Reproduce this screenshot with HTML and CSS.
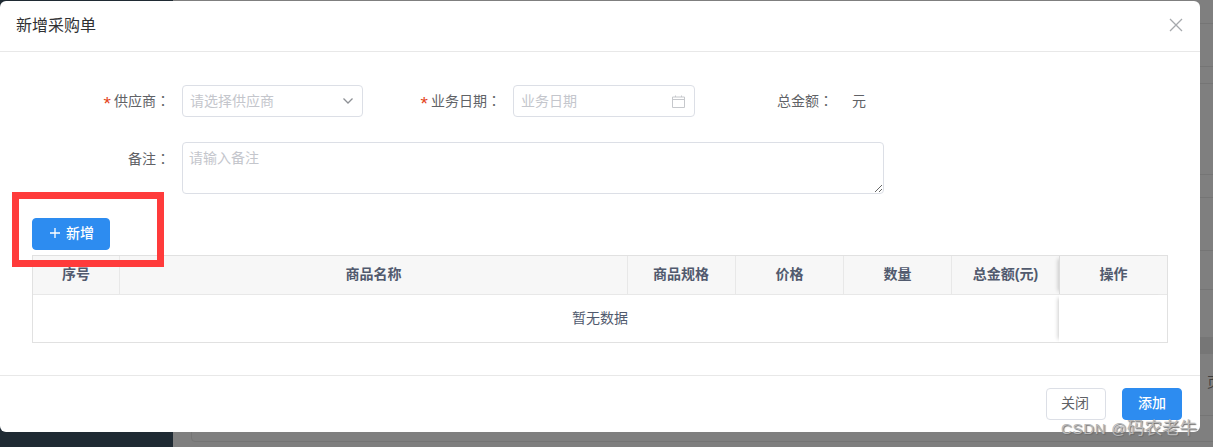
FILE: index.html
```html
<!DOCTYPE html>
<html lang="zh-CN">
<head>
<meta charset="utf-8">
<title>新增采购单</title>
<link rel="stylesheet" href="styles.css">
</head>
<body>
<div class="backdrop">
  <aside class="sidebar"></aside>
  <main class="main">
    <div class="main-card"></div>
    <span class="bg-line l1"></span>
    <span class="bg-line l2"></span>
    <span class="bg-line l3"></span>
    <span class="bg-line l4"></span>
    <span class="bg-line l5"></span>
    <span class="bg-line l6"></span>
    <span class="bg-line l7"></span>
    <span class="bg-band"></span>
    <span class="page-char">页</span>
  </main>
</div>

<section class="dialog">
  <header class="dialog-header">
    <h2 class="dialog-title">新增采购单</h2>
    <svg class="close-icon" width="14" height="14" viewBox="0 0 14 14"><path d="M1 1 L13 13 M13 1 L1 13" stroke="#a6a9ad" stroke-width="1.3" fill="none"/></svg>
  </header>
  <div class="dialog-body">
    <div class="form-row first-row">
      <label class="form-label"><span class="required">*</span>供应商<span class="colon" lang="zh-TW">：</span></label>
      <div class="input select-input">
        <span class="placeholder">请选择供应商</span>
        <svg width="10" height="6" viewBox="0 0 10 6"><path d="M0.5 0.5 L5 5 L9.5 0.5" stroke="#8d9095" stroke-width="1.3" fill="none"/></svg>
      </div>
      <label class="form-label"><span class="required">*</span>业务日期<span class="colon" lang="zh-TW">：</span></label>
      <div class="input date-input">
        <span class="placeholder">业务日期</span>
        <svg width="13" height="13" viewBox="0 0 13 13"><path d="M.5 2 H12.5 V12.5 H.5 Z M.5 4.5 H12.5 M3.5 .5 V2 M9.5 .5 V2" stroke="#c6c8cc" stroke-width="1" fill="none"/></svg>
      </div>
      <label class="form-label">总金额<span class="colon" lang="zh-TW">：</span></label>
      <span class="unit">元</span>
    </div>
    <div class="form-row note-row">
      <label class="form-label note-label">备注<span class="colon" lang="zh-TW">：</span></label>
      <textarea class="note-input" placeholder="请输入备注"></textarea>
    </div>
    <button class="btn btn-primary add-btn" type="button">
      <svg width="10" height="10" viewBox="0 0 10 10"><path d="M5 0 V10 M0 5 H10" stroke="#fff" stroke-width="1.3" fill="none"/></svg>
      <span>新增</span>
    </button>
    <div class="table">
      <div class="t-row t-head">
        <div class="cell">序号</div>
        <div class="cell">商品名称</div>
        <div class="cell cell-spec">商品规格</div>
        <div class="cell">价格</div>
        <div class="cell">数量</div>
        <div class="cell cell-total"><span>总金额<span class="latin">(</span>元<span class="latin">)</span></span></div>
        <div class="cell cell-fixed">操作</div>
      </div>
      <div class="t-empty">
        <div class="empty-text">暂无数据</div>
        <div class="empty-fixed"></div>
      </div>
    </div>
  </div>
  <footer class="dialog-footer">
    <button class="btn btn-plain" type="button">关闭</button>
    <button class="btn btn-primary submit-btn" type="button">添加</button>
  </footer>
</section>

<div class="annotation"></div>
<div class="watermark">CSDN @<span class="wm-cn">码农老牛</span></div>
</body>
</html>
```

FILE: styles.css
```css
* { box-sizing: border-box; }
html, body { margin: 0; padding: 0; height: 100%; overflow: hidden; }
body {
  font-family: "Noto Sans CJK SC", "Liberation Sans", sans-serif;
  font-size: 14px;
  color: #606266;
  background: #7f7f7f;
}
.backdrop { display: flex; height: 447px; }
.sidebar { width: 173px; background: #1f2a33; }
.main { flex: 1; background: #7f7f7f; position: relative; overflow: hidden; }
.main-card {
  position: absolute; left: 18px; top: 415px; width: 1100px; height: 27px;
  border: 1px solid #757575; border-radius: 4px;
}
.bg-line { position: absolute; left: 0; right: 0; height: 1px; background: #757575; }
.l1 { top: 23px; }
.l2 { top: 66px; }
.l3 { top: 83px; }
.l4 { top: 174px; }
.l5 { top: 197px; }
.l6 { top: 250px; }
.l7 { top: 289px; }
.bg-band { position: absolute; left: 0; right: 0; top: 337px; height: 17px; background: #767676; }
.page-char { position: absolute; left: 1034px; top: 371px; color: #3f3f3f; font-size: 14px; }

.dialog {
  position: absolute; left: 0; top: 1px;
  width: 1200px; height: 431px;
  background: #fff; border-radius: 6px;
  display: flex; flex-direction: column;
}
.dialog-header {
  height: 51px; flex: none;
  border-bottom: 1px solid #e8e8e8;
  display: flex; align-items: center; justify-content: space-between;
  padding: 0 17px 3px 16px;
}
.dialog-title { margin: 0 0 2px; font-size: 16px; font-weight: 400; color: #303133; line-height: 24px; }
.dialog-body { flex: 1; padding: 33px 32px 0; }
.form-row { display: flex; align-items: center; height: 32px; }
.form-label { width: 138px; flex: none; text-align: right; line-height: 30px; padding-bottom: 2px; color: #606266; white-space: nowrap; }
.note-label { line-height: 32px; padding-bottom: 0; }
.colon { font-family: "Noto Sans CJK TC", sans-serif; }
.required {
  color: #e4431a; margin-right: 1px;
  font-family: "Liberation Mono", monospace; font-size: 19px;
  line-height: 0; vertical-align: -4px;
}
.input {
  height: 32px; flex: none; margin-left: 12px;
  border: 1px solid #dcdfe6; border-radius: 4px;
  display: flex; align-items: center; justify-content: space-between;
  padding: 0 9px 0 7px;
}
.select-input { width: 181px; }
.date-input { width: 182px; }
.placeholder { color: #c4c6cc; padding-bottom: 2px; }
.unit { margin-left: 19px; color: #606266; padding-bottom: 2px; }
.note-row { margin-top: 25px; align-items: flex-start; height: 52px; }
.note-input {
  width: 702px; height: 52px; margin: 0 0 0 12px;
  border: 1px solid #dcdfe6; border-radius: 4px;
  padding: 4px 6px; resize: both;
  font: inherit; color: #606266; line-height: 20px; outline: none; display: block;
}
.note-input::placeholder { color: #c4c6cc; opacity: 1; }
.btn {
  height: 32px; border-radius: 4px; font: inherit; cursor: pointer;
  display: inline-flex; align-items: center; justify-content: center; padding: 0 0 4px;
}
.btn-primary { background: #2d8cf0; border: 1px solid #2d8cf0; color: #fff; font-weight: 500; }
.btn-plain { background: #fff; border: 1px solid #dcdfe6; color: #606266; width: 60px; padding-right: 2px; }
.add-btn { width: 78px; margin-top: 24px; display: flex; gap: 6px; padding-left: 2px; }
.add-btn svg { margin-top: 2px; }
.submit-btn { width: 60px; }
.table {
  margin-top: 5px; width: 1136px; height: 88px;
  border: 1px solid #e1e1e1; display: flex; flex-direction: column;
}
.t-row { display: grid; grid-template-columns: 87px 508px 108px 108px 108px 107px 108px; }
.t-head { height: 39px; background: #f7f7f7; border-bottom: 1px solid #e8e8e8; }
.cell {
  display: flex; align-items: center; justify-content: center; padding-bottom: 4px;
  border-right: 1px solid #e8e8e8; font-weight: 700; color: #515a6e;
}
.cell-spec { padding-right: 1px; }
.cell-total { border-right: none; }
.latin { font-family: "Liberation Sans", sans-serif; }
.cell-fixed { border-right: none; border-left: 1px solid #dcdcdc; box-shadow: -4px 0 4px -3px rgba(0,0,0,.2); }
.t-empty { flex: 1; display: flex; }
.empty-text { flex: 1; display: flex; align-items: center; justify-content: center; color: #515a6e; padding: 0 0 4px 108px; }
.empty-fixed { width: 108px; background: #fff; box-shadow: -4px 0 4px -3px rgba(0,0,0,.2); }
.dialog-footer {
  height: 57px; flex: none;
  border-top: 1px solid #e8e8e8;
  display: flex; align-items: flex-start; justify-content: flex-end;
  gap: 16px; padding: 12px 18px 0 0;
}
.annotation {
  position: absolute; left: 12px; top: 192px; width: 152px; height: 75px;
  border: 7px solid #ff3b3b;
}
.watermark {
  position: absolute; left: 1061px; top: 416px;
  font-family: "Liberation Sans", "Noto Sans CJK SC", sans-serif;
  font-size: 15px; line-height: 24px; color: #b8b8b8;
  text-shadow: 1px 1px 1px #6e6e6e;
  white-space: nowrap; letter-spacing: 0.7px;
}
.wm-cn { font-size: 17.5px; letter-spacing: 0; }
```
